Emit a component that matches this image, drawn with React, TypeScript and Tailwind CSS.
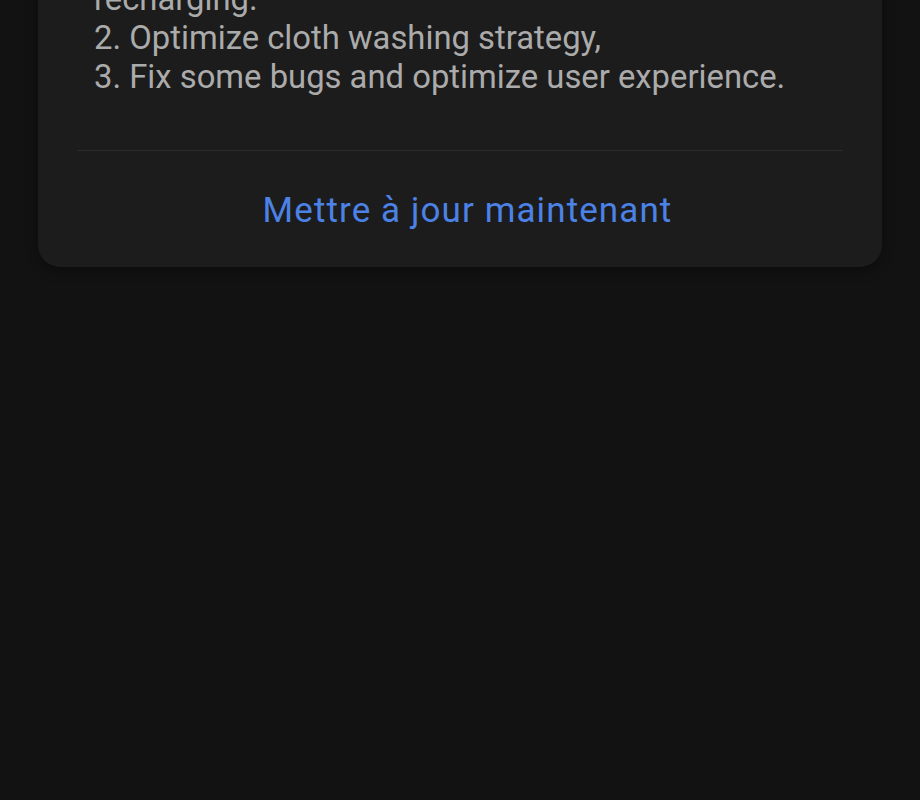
import React from "react";

export default function App() {
  return (
    <div className="w-[920px] h-[800px] bg-[#121212] overflow-hidden" style={{ fontFamily: "Roboto, 'Noto Sans', sans-serif" }}>
      <div className="mx-[38px] w-[844px] bg-[#1c1c1c] rounded-b-[22px] shadow-[0_4px_12px_rgba(0,0,0,0.35)]">
        <div className="pl-[56px] pr-[40px] mt-[-20px] text-[32.8px] leading-[39px] text-[#ababab]">
          <div>recharging.</div>
          <div>2. Optimize cloth washing strategy,</div>
          <div>3. Fix some bugs and optimize user experience.</div>
        </div>
        <div className="mx-[39px] mt-[53px] h-px bg-[#2b2b2b]" />
        <div className="pt-[40px] pb-[37px] pl-[15px] text-center text-[35px] tracking-[1.1px] leading-[39px] text-[#4c82e6]">
          Mettre à jour maintenant
        </div>
      </div>
    </div>
  );
}
